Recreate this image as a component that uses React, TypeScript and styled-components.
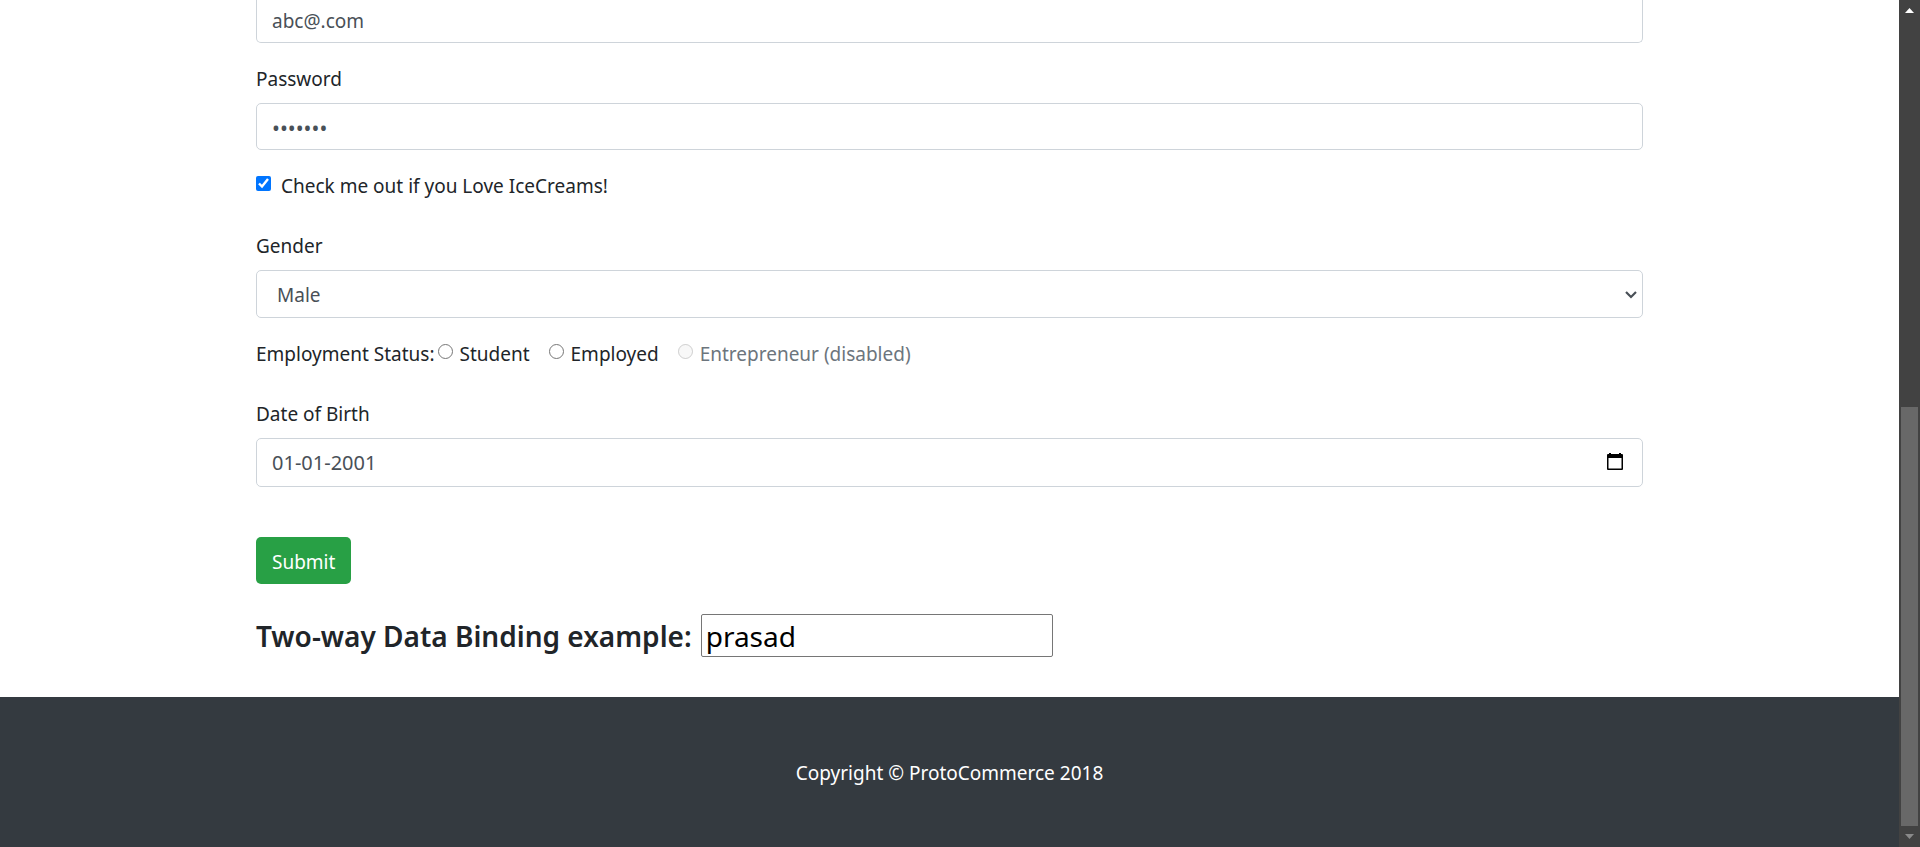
import React, { useState } from "react";
import styled, { createGlobalStyle, css } from "styled-components";

const GlobalStyle = createGlobalStyle`
  *, *::before, *::after { box-sizing: border-box; }
  body {
    margin: 0;
    background: #fff;
    color: #212529;
    font-family: "Noto Sans", "Open Sans", sans-serif;
    font-size: 19px;
    line-height: 32px;
  }
`;

const Shell = styled.div`
  display: flex;
  align-items: stretch;
  min-height: 100vh;
`;

const Page = styled.div`
  flex: 1;
  min-width: 0;
  display: flex;
  flex-direction: column;
`;

const Container = styled.main`
  flex: 1;
  width: 100%;
  max-width: 1425px;
  margin: 0 auto;
  padding: 0 19px 40px;
`;

const Group = styled.div`
  margin-bottom: 20px;
`;

const Label = styled.label`
  display: block;
  margin-bottom: 8px;
`;

const controlStyle = css`
  display: block;
  width: 100%;
  border: 1px solid #ced4da;
  border-radius: 5px;
  background: #fff;
  color: #495057;
  font: inherit;
  outline: none;
`;

const Control = styled.input<{ $continued?: boolean }>`
  ${controlStyle}
  height: 47px;
  padding: 0 15px;
  ${(p) =>
    p.$continued &&
    css`
      height: 43px;
      border-top: 0;
      border-radius: 0 0 5px 5px;
    `}
`;

const PasswordControl = styled(Control)`
  padding-top: 2px;
  font-size: 21px;
`;

const DateControl = styled(Control)`
  height: 49px;
  padding-right: 56px;
  font-size: 20px;
`;

const Select = styled.select`
  ${controlStyle}
  height: 48px;
  padding: 2px 40px 0 20px;
  appearance: none;
`;

const ControlWrap = styled.div`
  position: relative;
`;

const Chevron = styled.svg`
  position: absolute;
  top: 18px;
  right: 5px;
  pointer-events: none;
`;

const CalendarButton = styled.button`
  position: absolute;
  top: 14px;
  right: 18px;
  width: 20px;
  height: 20px;
  padding: 0;
  border: 0;
  background: none;

  svg { display: block; }
`;

const CheckRow = styled.div`
  display: flex;
  align-items: center;
  margin-bottom: 28px;
`;

const StatusRow = styled(CheckRow)`
  gap: 19px;
`;

const StatusFirst = styled.div`
  display: flex;
  gap: 3px;
`;

const Choice = styled.label<{ $gap: number; $muted?: boolean }>`
  display: flex;
  align-items: center;
  gap: ${(p) => p.$gap}px;
  color: ${(p) => (p.$muted ? "#6c757d" : "inherit")};
`;

const Tick = styled.input`
  flex: none;
  width: 15px;
  height: 15px;
  margin: 0 0 6px;
`;

const Submit = styled.button`
  display: block;
  height: 47px;
  margin: 50px 0 30px;
  padding: 2px 16px 0;
  border: 0;
  border-radius: 5px;
  background: #28a045;
  color: #fff;
  font: inherit;
`;

const Binding = styled.h4`
  display: flex;
  align-items: center;
  gap: 9px;
  margin: 0;
  font-size: 28px;
  font-weight: 600;
  line-height: 36px;
`;

const BindingInput = styled.input`
  width: 352px;
  height: 43px;
  padding: 0 4px;
  border: 1px solid #767676;
  border-radius: 2px;
  background: #fff;
  color: #000;
  font: inherit;
  font-weight: 400;
  outline: none;
`;

const Footer = styled.footer`
  padding: 60px 19px 58px;
  background: #343a40;
  color: #fff;
  text-align: center;
`;

const Copyright = styled.p`
  margin: 0;
`;

const ScrollColumn = styled.aside`
  position: sticky;
  top: 0;
  flex: none;
  display: flex;
  flex-direction: column;
  width: 21px;
  height: 100vh;
  padding: 0 2px;
  background: #424242;
`;

const ScrollArrow = styled.button`
  flex: none;
  display: flex;
  align-items: center;
  justify-content: center;
  height: 21px;
  padding: 0;
  border: 0;
  background: none;
`;

const ScrollTrack = styled.div`
  flex: 1;
  display: flex;
  flex-direction: column;
  justify-content: flex-end;
`;

const ScrollThumb = styled.div`
  height: 52%;
  background: #686868;
`;

export default function App() {
  const [email, setEmail] = useState("abc@.com");
  const [password, setPassword] = useState("abcdefg");
  const [birth, setBirth] = useState("01-01-2001");
  const [name, setName] = useState("prasad");

  return (
    <Shell>
      <GlobalStyle />
      <Page>
        <Container>
          <form onSubmit={(e) => e.preventDefault()}>
            <Group>
              <Control $continued aria-label="Email" value={email} onChange={(e) => setEmail(e.target.value)} />
            </Group>
            <Group>
              <Label htmlFor="password">Password</Label>
              <PasswordControl
                id="password"
                type="password"
                value={password}
                onChange={(e) => setPassword(e.target.value)}
              />
            </Group>
            <CheckRow>
              <Choice $gap={10}>
                <Tick type="checkbox" defaultChecked />
                Check me out if you Love IceCreams!
              </Choice>
            </CheckRow>
            <Group>
              <Label htmlFor="gender">Gender</Label>
              <ControlWrap>
                <Select id="gender" defaultValue="Male">
                  <option>Male</option>
                  <option>Female</option>
                </Select>
                <Chevron width="13" height="13" viewBox="0 0 13 13" fill="none" aria-hidden="true">
                  <path d="M1 4 L6 9 L11 4" stroke="#495057" strokeWidth="2.2" />
                </Chevron>
              </ControlWrap>
            </Group>
            <StatusRow>
              <StatusFirst>
                <span>Employment Status:</span>
                <Choice $gap={7}>
                  <Tick type="radio" name="status" />
                  Student
                </Choice>
              </StatusFirst>
              <Choice $gap={7}>
                <Tick type="radio" name="status" />
                Employed
              </Choice>
              <Choice $gap={7} $muted>
                <Tick type="radio" name="status" disabled />
                Entrepreneur (disabled)
              </Choice>
            </StatusRow>
            <Group>
              <Label htmlFor="birth">Date of Birth</Label>
              <ControlWrap>
                <DateControl id="birth" value={birth} onChange={(e) => setBirth(e.target.value)} />
                <CalendarButton type="button" aria-label="Open calendar">
                  <svg width="20" height="20" viewBox="0 0 20 20">
                    <path
                      fill="#000"
                      fillRule="evenodd"
                      d="M4 1h2v1h8V1h2v1h1a1 1 0 0 1 1 1v14a1 1 0 0 1-1 1H3a1 1 0 0 1-1-1V3a1 1 0 0 1 1-1h1zM3.500 6v10.500h13V6z"
                    />
                  </svg>
                </CalendarButton>
              </ControlWrap>
            </Group>
            <Submit type="submit">Submit</Submit>
          </form>
          <Binding>
            <label htmlFor="binding">Two-way Data Binding example:</label>
            <BindingInput id="binding" value={name} onChange={(e) => setName(e.target.value)} />
          </Binding>
        </Container>
        <Footer>
          <Copyright>Copyright © ProtoCommerce 2018</Copyright>
        </Footer>
      </Page>
      <ScrollColumn>
        <ScrollArrow type="button" aria-label="Scroll up">
          <svg width="9" height="5" viewBox="0 0 9 5">
            <path d="M0 5 L4.500 0 L9 5z" fill="#fff" />
          </svg>
        </ScrollArrow>
        <ScrollTrack>
          <ScrollThumb />
        </ScrollTrack>
        <ScrollArrow type="button" aria-label="Scroll down">
          <svg width="9" height="5" viewBox="0 0 9 5">
            <path d="M0 0 L4.500 5 L9 0z" fill="#8a8a8a" />
          </svg>
        </ScrollArrow>
      </ScrollColumn>
    </Shell>
  );
}
